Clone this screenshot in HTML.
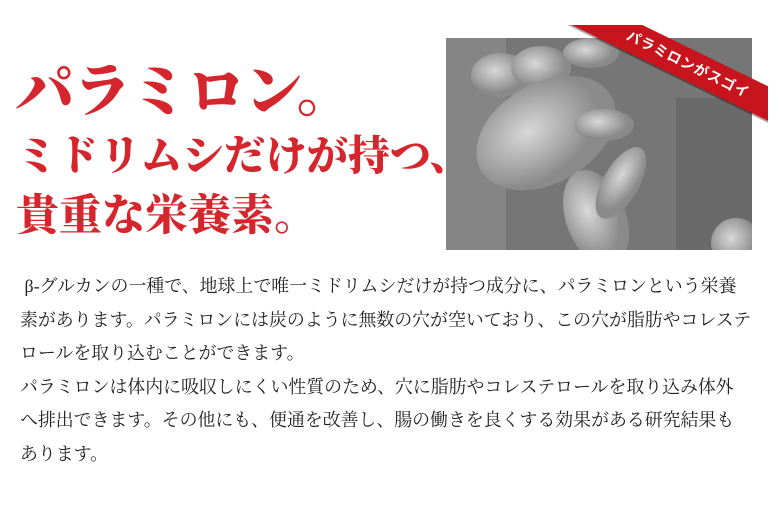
<!DOCTYPE html>
<html><head><meta charset="utf-8"><style>
html,body{margin:0;padding:0;background:#fff;width:780px;height:507px;overflow:hidden;position:relative}
.h{position:absolute;left:16px;color:#d4262c;font-family:"Noto Serif CJK JP","Noto Serif CJK SC",serif;font-weight:900;white-space:nowrap}
.img{position:absolute;left:446px;top:38px;width:306px;height:212px;overflow:hidden;background:#777}
.rc{position:absolute;left:560px;top:25px;width:208px;height:100px;overflow:hidden}
.rib{position:absolute;left:-22px;top:24px;width:300px;height:31px;background:#c8141c;transform:rotate(26deg);transform-origin:center;color:#fff;font:bold 14px "Liberation Sans","Noto Sans CJK JP",sans-serif;text-align:center;line-height:31px;letter-spacing:1px}
.sh{position:absolute;left:-20px;top:27px;width:300px;height:31px;background:rgba(0,0,0,.35);transform:rotate(26deg)}
.body{position:absolute;left:20px;top:270px;width:740px;font:17.9px/33.6px "Liberation Serif","Noto Serif CJK JP",serif;color:#222}
</style></head><body>
<div class="h" style="top:44px;font-size:58px;letter-spacing:-1px">パラミロン。</div>
<div class="h" style="top:122px;font-size:41.5px;letter-spacing:0">ミドリムシだけが持つ、</div>
<div class="h" style="top:182px;font-size:43px">貴重な栄養素。</div>
<div class="img"><svg width="306" height="212">
<defs><radialGradient id="g" cx="40%" cy="40%"><stop offset="0" stop-color="#d8d8d8"/><stop offset="1" stop-color="#8a8a8a"/></radialGradient></defs>
<rect width="306" height="212" fill="#767676"/>
<rect x="0" y="0" width="60" height="212" fill="#858585"/>
<rect x="230" y="60" width="76" height="152" fill="#6a6a6a"/>
<ellipse cx="55" cy="37" rx="30" ry="22" fill="url(#g)"/>
<ellipse cx="95" cy="30" rx="30" ry="22" fill="url(#g)"/>
<ellipse cx="145" cy="15" rx="28" ry="15" fill="url(#g)"/>
<ellipse cx="100" cy="95" rx="75" ry="50" transform="rotate(-30 100 95)" fill="url(#g)"/>
<ellipse cx="158" cy="87" rx="30" ry="16" fill="url(#g)"/>
<ellipse cx="150" cy="180" rx="30" ry="50" transform="rotate(-20 150 180)" fill="url(#g)"/>
<ellipse cx="175" cy="145" rx="18" ry="40" transform="rotate(30 175 145)" fill="url(#g)"/>
<ellipse cx="290" cy="205" rx="25" ry="25" fill="url(#g)"/>
</svg></div>
<div class="rc"><div class="sh"></div><div class="rib">パラミロンがスゴイ</div></div>
<div class="body">&nbsp;β-グルカンの一種で、地球上で唯一ミドリムシだけが持つ成分に、パラミロンという栄養<br>素があります。パラミロンには炭のように無数の穴が空いており、この穴が脂肪やコレステ<br>ロールを取り込むことができます。<br>パラミロンは体内に吸収しにくい性質のため、穴に脂肪やコレステロールを取り込み体外<br>へ排出できます。その他にも、便通を改善し、腸の働きを良くする効果がある研究結果も<br>あります。</div>
</body></html>
